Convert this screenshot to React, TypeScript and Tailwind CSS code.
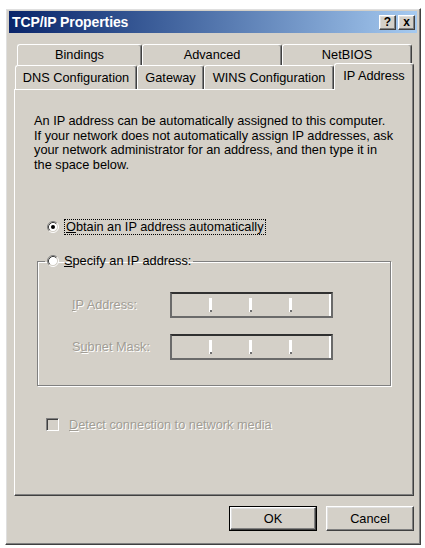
import React from 'react';

const raised =
  'border border-t-white border-l-white border-r-[#404040] border-b-[#404040] shadow-[inset_-1px_-1px_0_#808080,inset_1px_1px_0_#dfdfdf]';
const sunken =
  'border border-t-[#808080] border-l-[#808080] border-r-white border-b-white shadow-[inset_1px_1px_0_#404040,inset_-1px_-1px_0_#d4d0c8]';
const tab =
  'flex items-center justify-center border-t border-l border-t-white border-l-white border-r border-r-[#404040] shadow-[inset_-1px_0_0_#808080] rounded-t-[3px] bg-[#d4d0c8]';
const disabledText = 'text-[#a19d95] [text-shadow:1px_1px_0_#ffffff]';

function Radio({ checked }: { checked?: boolean }) {
  return (
    <svg width="12" height="12" viewBox="0 0 12 12" className="shrink-0">
      <circle cx="6" cy="6" r="4.5" fill="#ffffff" />
      <path d="M9.89 2.11 A5.5 5.5 0 0 0 2.11 9.89" stroke="#808080" strokeWidth="1" fill="none" />
      <path d="M2.11 9.89 A5.5 5.5 0 0 0 9.89 2.11" stroke="#ffffff" strokeWidth="1" fill="none" />
      <path d="M9.18 2.82 A4.5 4.5 0 0 0 2.82 9.18" stroke="#404040" strokeWidth="1" fill="none" />
      <path d="M2.82 9.18 A4.5 4.5 0 0 0 9.18 2.82" stroke="#d4d0c8" strokeWidth="1" fill="none" />
      {checked && <circle cx="6" cy="6" r="2" fill="#000000" />}
    </svg>
  );
}

function IpField() {
  return (
    <div className="w-[163px] h-[26px] bg-[#d4d0c8] flex items-center border-2 border-t-[#303030] border-l-[#6a6a6a] border-b-[#6a6a6a] border-r-[#6a6a6a] shadow-[inset_-2px_0_0_#ffffff]">
      <div className="w-[37px]" />
      {[0, 1, 2].map((i) => (
        <div key={i} className="flex items-center">
          <div className="w-[3px] h-[14px] bg-white flex items-end justify-center">
            <div className="w-[2px] h-[2px] bg-[#707070]" />
          </div>
          {i < 2 && <div className="w-[37px]" />}
        </div>
      ))}
    </div>
  );
}

export default function App() {
  return (
    <div
      className="min-h-screen bg-white pt-[8px] pl-[5px] text-[12.75px] text-black"
      style={{ fontFamily: '"Liberation Sans", Arial, sans-serif' }}
    >
      <div className={`${raised} w-[416px] h-[537px] bg-[#d4d0c8] p-[2px] flex flex-col`}>
        {/* Title bar */}
        <div className="h-[22px] mx-[1px] bg-gradient-to-r from-[#0a246a] to-[#a6caf0] flex items-center pl-[3px] pr-[2px]">
          <span className="text-white font-bold text-[14px] tracking-[-0.1px]">TCP/IP Properties</span>
          <div className="ml-auto flex gap-[2px]">
            <div className={`${raised} w-[17px] h-[15px] bg-[#d4d0c8] flex items-center justify-center text-[12px] font-bold leading-none`}>
              ?
            </div>
            <div className={`${raised} w-[17px] h-[15px] bg-[#d4d0c8] flex items-center justify-center text-[12px] font-bold leading-none`}>
              x
            </div>
          </div>
        </div>

        {/* Tab control */}
        <div className="mt-[11px] ml-[6px] w-[400px]">
          <div className="flex ml-[3px] h-[21px]">
            <div className={`${tab} w-[125px]`}>Bindings</div>
            <div className={`${tab} w-[140px]`}>Advanced</div>
            <div className={`${tab} w-[130px]`}>NetBIOS</div>
          </div>
          <div className="flex items-end h-[24px] ml-[1px] relative z-10">
            <div className={`${tab} w-[122px] h-[24px]`}>DNS Configuration</div>
            <div className={`${tab} w-[67px] h-[24px]`}>Gateway</div>
            <div className={`${tab} w-[130px] h-[24px]`}>WINS Configuration</div>
            <div className={`${tab} w-[80px] h-[27px] -mb-px pb-[2px]`}>IP Address</div>
          </div>
          <div className="h-[407px] border border-t-white border-l-white border-r-[#404040] border-b-[#404040] shadow-[inset_-1px_-1px_0_#808080] pt-[24px]">
            <p className="pl-[19px] leading-[14.5px]">
              An IP address can be automatically assigned to this computer.
              <br />
              If your network does not automatically assign IP addresses, ask
              <br />
              your network administrator for an address, and then type it in
              <br />
              the space below.
            </p>

            <div className="mt-[47px] ml-[32px] flex items-center h-[16px] gap-[5px]">
              <Radio checked />
              <span className="border border-dotted border-black px-[1px] leading-[14px]">
                <u>O</u>btain an IP address automatically
              </span>
            </div>

            <fieldset className="mt-[18px] ml-[22px] w-[354px] border border-[#808080] shadow-[inset_1px_1px_0_#ffffff,1px_1px_0_#ffffff] pb-[25px]">
              <legend className="ml-[7px] px-[2px] flex items-center gap-[5px] h-[16px]">
                <Radio />
                <span>
                  <u>S</u>pecify an IP address:
                </span>
              </legend>
              <div className="pl-[34px] mt-[23px] flex flex-col gap-[16px]">
                <div className="flex items-center">
                  <span className={`w-[98px] ${disabledText}`}>
                    <u>I</u>P Address:
                  </span>
                  <IpField />
                </div>
                <div className="flex items-center">
                  <span className={`w-[98px] ${disabledText}`}>
                    S<u>u</u>bnet Mask:
                  </span>
                  <IpField />
                </div>
              </div>
            </fieldset>

            <div className="mt-[29px] ml-[31px] flex items-center gap-[10px]">
              <div className={`${sunken} w-[13px] h-[13px] bg-[#d4d0c8]`} />
              <span className={disabledText}>
                <u>D</u>etect connection to network media
              </span>
            </div>
          </div>

          {/* Buttons */}
          <div className="mt-[10px] flex justify-end gap-[9px]">
            <div className="border border-black">
              <div className={`${raised} w-[86px] h-[23px] bg-[#d4d0c8] flex items-center justify-center`}>OK</div>
            </div>
            <div className={`${raised} w-[88px] h-[25px] bg-[#d4d0c8] flex items-center justify-center`}>Cancel</div>
          </div>
        </div>
      </div>
    </div>
  );
}
